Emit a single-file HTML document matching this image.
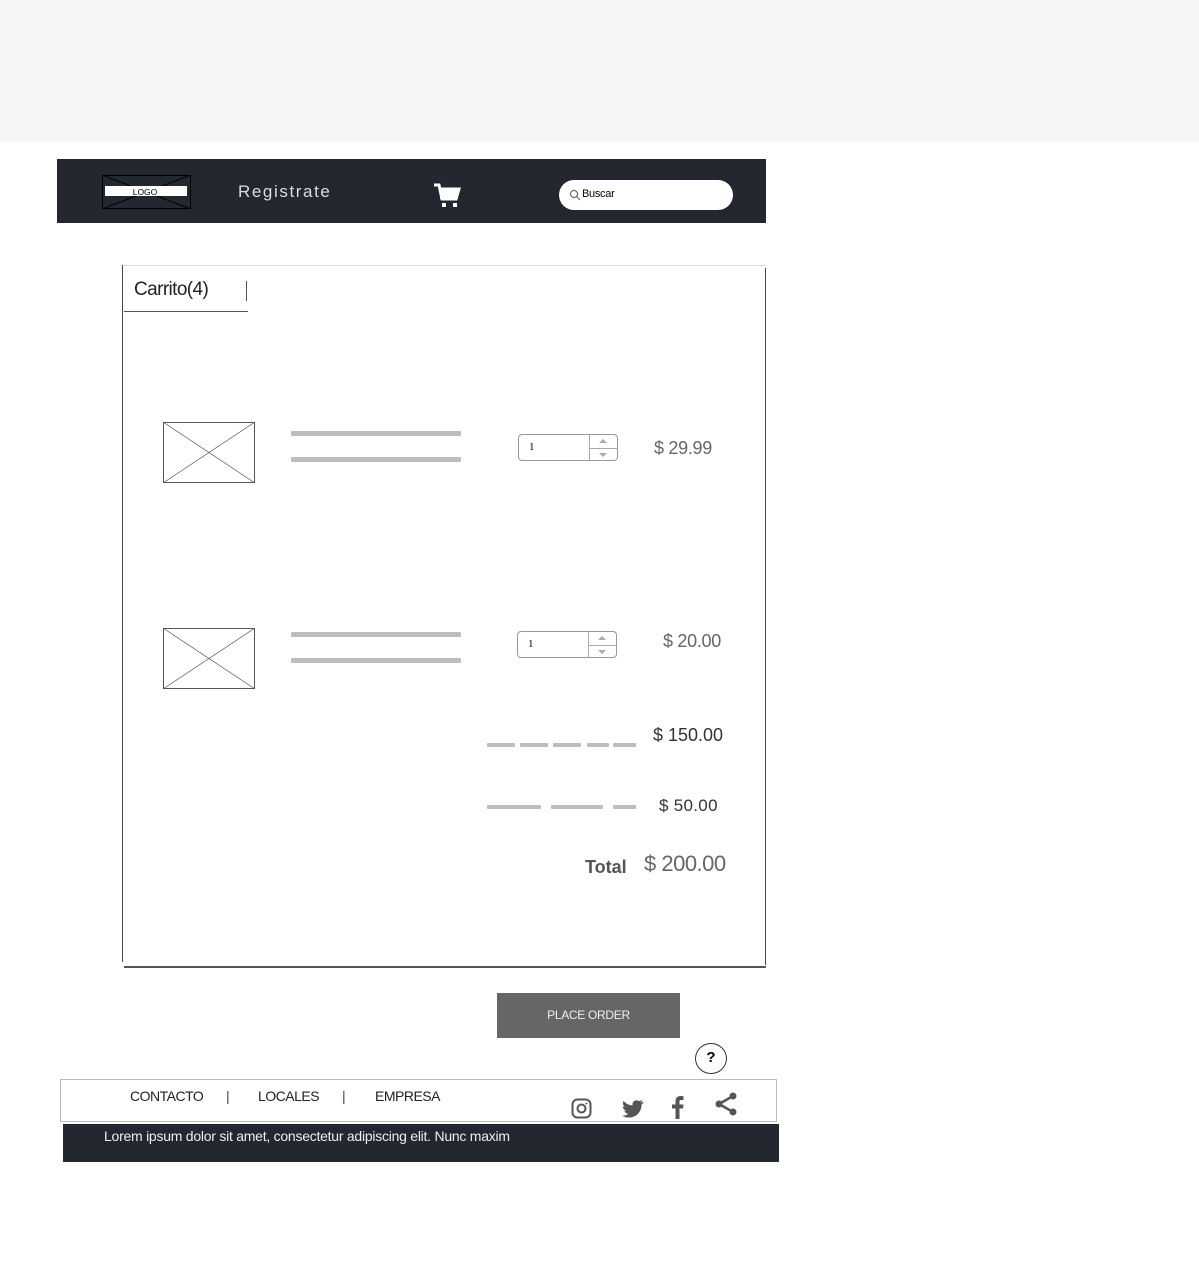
<!DOCTYPE html>
<html><head><meta charset="utf-8"><style>
*{margin:0;padding:0;box-sizing:border-box}
body{width:1199px;height:1280px;background:#fff;position:relative;font-family:"Liberation Sans Narrow","Liberation Sans",sans-serif;overflow:hidden}
.a{position:absolute}
.bar{background:#bdbdbd;height:5px;border-radius:1px}
.num{border:1px solid #999;border-radius:4px;background:#fff;width:100px;height:27px;font-size:11px;font-family:"Liberation Serif",serif}
.num span{position:absolute;left:10px;top:6px}
.num i{position:absolute;left:70px;top:0;width:1px;height:100%;background:#aaa}
.num b{position:absolute;left:71px;top:13px;width:28px;height:1px;background:#aaa}
.num u{position:absolute;left:80px;width:0;height:0;border-left:4px solid transparent;border-right:4px solid transparent}
.price{color:#666;font-size:18px;letter-spacing:-0.3px}
.ft{font-size:14px;color:#222;letter-spacing:-0.5px}
</style></head><body>
<div class="a" style="left:0;top:0;width:1199px;height:142px;background:#f6f6f6"></div>
<div class="a" style="left:57px;top:159px;width:709px;height:64px;background:#222730"></div>
<svg class="a" style="left:102px;top:175px" width="89" height="34"><rect x="0.5" y="0.5" width="88" height="33" fill="none" stroke="#000"/><line x1="0" y1="0" x2="89" y2="34" stroke="#000"/><line x1="89" y1="0" x2="0" y2="34" stroke="#000"/><rect x="3" y="11" width="82" height="10" fill="#fff"/><text x="43" y="20" font-size="8.5" text-anchor="middle" font-family="Liberation Sans">LOGO</text></svg>
<div class="a" style="left:238px;top:182px;color:#ddd;font-size:17px;letter-spacing:1.6px">Registrate</div>
<svg class="a" style="left:433px;top:183px" width="28" height="26" viewBox="0 0 28 26"><path d="M1 2h5l3 14h14l3-10H7" fill="none" stroke="#fff" stroke-width="3"/><rect x="7" y="6" width="18" height="10" fill="#fff"/><rect x="9" y="20" width="4" height="4" fill="#fff"/><rect x="20" y="20" width="4" height="4" fill="#fff"/></svg>
<div class="a" style="left:559px;top:180px;width:174px;height:30px;background:#fff;border-radius:15px;font-size:11px;padding:8px 0 0 23px;letter-spacing:-0.3px">Buscar</div>
<svg class="a" style="left:569px;top:189px" width="12" height="12"><circle cx="5" cy="5" r="3.5" fill="none" stroke="#555"/><line x1="7.5" y1="7.5" x2="11" y2="11" stroke="#555"/></svg>

<div class="a" style="left:124px;top:265px;width:642px;height:1px;background:#ddd"></div>
<div class="a" style="left:122px;top:265px;width:1px;height:697px;background:#444"></div>
<div class="a" style="left:765px;top:268px;width:1px;height:697px;background:#444"></div>
<div class="a" style="left:124px;top:966px;width:642px;height:2px;background:#555"></div>
<div class="a" style="left:134px;top:279px;font-size:19px;color:#222;letter-spacing:-0.6px">Carrito(4)</div>
<div class="a" style="left:246px;top:281px;width:1px;height:20px;background:#555"></div>
<div class="a" style="left:124px;top:311px;width:124px;height:1px;background:#555"></div>

<svg class="a" style="left:163px;top:422px" width="92" height="61"><rect x=".5" y=".5" width="91" height="60" fill="none" stroke="#555"/><line x1="0" y1="0" x2="92" y2="61" stroke="#555" stroke-width=".7"/><line x1="92" y1="0" x2="0" y2="61" stroke="#555" stroke-width=".7"/></svg>
<div class="a bar" style="left:291px;top:431px;width:170px"></div>
<div class="a bar" style="left:291px;top:457px;width:170px"></div>
<div class="a num" style="left:518px;top:434px"><span>1</span><i></i><b></b><u style="top:4px;border-bottom:4px solid #aaa"></u><u style="top:18px;border-top:4px solid #aaa"></u></div>
<div class="a price" style="left:654px;top:438px">$ 29.99</div>

<svg class="a" style="left:163px;top:628px" width="92" height="61"><rect x=".5" y=".5" width="91" height="60" fill="none" stroke="#555"/><line x1="0" y1="0" x2="92" y2="61" stroke="#555" stroke-width=".7"/><line x1="92" y1="0" x2="0" y2="61" stroke="#555" stroke-width=".7"/></svg>
<div class="a bar" style="left:291px;top:632px;width:170px"></div>
<div class="a bar" style="left:291px;top:658px;width:170px"></div>
<div class="a num" style="left:517px;top:631px"><span>1</span><i></i><b></b><u style="top:4px;border-bottom:4px solid #aaa"></u><u style="top:18px;border-top:4px solid #aaa"></u></div>
<div class="a price" style="left:663px;top:631px">$ 20.00</div>

<div class="a bar" style="left:487px;top:743px;width:28px;height:4px"></div>
<div class="a bar" style="left:520px;top:743px;width:28px;height:4px"></div>
<div class="a bar" style="left:553px;top:743px;width:28px;height:4px"></div>
<div class="a bar" style="left:587px;top:743px;width:22px;height:4px"></div>
<div class="a bar" style="left:613px;top:743px;width:23px;height:4px"></div>
<div class="a" style="left:653px;top:725px;font-size:18px;color:#333">$ 150.00</div>
<div class="a bar" style="left:487px;top:805px;width:54px;height:4px"></div>
<div class="a bar" style="left:551px;top:805px;width:52px;height:4px"></div>
<div class="a bar" style="left:613px;top:805px;width:23px;height:4px"></div>
<div class="a" style="left:659px;top:796px;font-size:17px;color:#333;letter-spacing:0.3px">$ 50.00</div>
<div class="a" style="left:585px;top:857px;font-size:18px;font-weight:bold;color:#555">Total</div>
<div class="a" style="left:644px;top:851px;font-size:22px;color:#666;letter-spacing:-0.5px">$ 200.00</div>

<div class="a" style="left:497px;top:993px;width:183px;height:45px;background:#666;color:#eee;font-size:12px;text-align:center;line-height:45px;letter-spacing:-0.3px">PLACE ORDER</div>
<div class="a" style="left:695px;top:1043px;width:32px;height:31px;border:1.5px solid #333;border-radius:50%;text-align:center;font-weight:bold;font-size:15px;line-height:28px">?</div>

<div class="a" style="left:60px;top:1079px;width:717px;height:43px;border:1px solid #bbb"></div>
<div class="a ft" style="left:130px;top:1088px">CONTACTO</div>
<div class="a ft" style="left:226px;top:1088px;color:#444">|</div>
<div class="a ft" style="left:258px;top:1088px">LOCALES</div>
<div class="a ft" style="left:342px;top:1088px;color:#444">|</div>
<div class="a ft" style="left:375px;top:1088px">EMPRESA</div>
<svg class="a" style="left:571px;top:1098px" width="21" height="21"><rect x="1.5" y="1.5" width="18" height="18" rx="5" fill="none" stroke="#555" stroke-width="2"/><circle cx="10.5" cy="10.5" r="4" fill="none" stroke="#555" stroke-width="2"/><circle cx="15.5" cy="5.5" r="1" fill="#555"/></svg>
<svg class="a" style="left:622px;top:1100px" width="22" height="18" viewBox="0 0 24 20"><path d="M23 2c-1 .5-2 .7-3 .8 1-.6 2-1.6 2-2.8-1 .6-2 1-3 1.2C17 .3 14-.3 12.5 2c-1 1-1.2 2.5-1 4C7.5 5.8 4 4 1.5 1 .2 3.3 1 6.2 3 7.5c-.8 0-1.6-.2-2.3-.6 0 2.4 1.7 4.4 3.9 4.9-.7.2-1.5.2-2.2.1.6 2 2.5 3.4 4.6 3.4C5 16.9 2.6 17.6 0 17.3 2.2 18.7 4.8 19.5 7.5 19.5c9 0 14-7.5 14-14v-.6c1-.7 1.8-1.6 2.5-2.6z" fill="#555"/></svg>
<svg class="a" style="left:671px;top:1096px" width="13" height="23"><path d="M8.5 23V12.5h3.5l.5-4H8.5V6c0-1.2.3-2 2-2h2V.3C12 .2 11 0 9.5 0 6.5 0 4.5 1.8 4.5 5.2v3.3H1v4h3.5V23z" fill="#555"/></svg>
<svg class="a" style="left:714px;top:1092px" width="25" height="25"><circle cx="19" cy="4" r="3.5" fill="#555"/><circle cx="5" cy="12" r="3.5" fill="#555"/><circle cx="19" cy="20" r="3.5" fill="#555"/><path d="M19 4L5 12l14 8" fill="none" stroke="#555" stroke-width="2.5"/></svg>
<div class="a" style="left:63px;top:1124px;width:716px;height:38px;background:#222730;color:#eee;font-size:14px;padding:4px 0 0 41px;letter-spacing:-0.25px">Lorem ipsum dolor sit amet, consectetur adipiscing elit. Nunc maxim</div>
</body></html>
